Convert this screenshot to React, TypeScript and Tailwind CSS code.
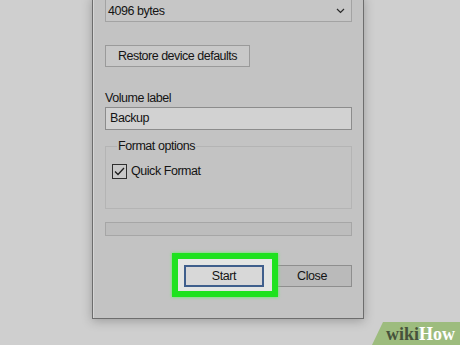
export default function App() {
  const ui = { fontFamily: '"Liberation Sans", Arial, sans-serif' };

  return (
    <div className="relative h-[345px] w-[460px] overflow-hidden bg-[#cfcfcf]" style={ui}>
      {/* dialog window, top is scrolled off */}
      <div className="-mt-[4px] ml-[92px] flex w-[272px] flex-col border border-[#6d6d6d] bg-[#c3c3c3] pb-[31px] pl-[12px] pr-[11px] text-[12.5px] tracking-[-0.45px] text-[#141414] shadow-[0_2px_10px_rgba(0,0,0,0.25),inset_1px_1px_0_#d6d6d6]">
        <div className="flex h-[25px] items-center justify-between border border-[#a3a3a3] bg-[#c6c6c6] pl-[2px] pr-[6px]">
          <span className="pt-[3px]">4096 bytes</span>
          <svg width="9" height="6" viewBox="0 0 9 6" className="mt-[3px]">
            <path d="M1 1 L4.5 4.5 L8 1" fill="none" stroke="#2a2a2a" strokeWidth="1.2" />
          </svg>
        </div>

        <button className="mt-[23px] h-[22px] w-[145px] border border-[#9a9a9a] bg-[#c8c8c8] text-center text-[12.5px] tracking-[-0.5px] text-[#141414]">
          Restore device defaults
        </button>

        <div className="mt-[23px] h-[16px] leading-[16px]">Volume label</div>
        <div className="mt-[1px] flex h-[23px] items-center border border-[#8c8c8c] bg-[#d2d2d2] pl-[4px]">
          Backup
        </div>

        <fieldset className="mt-[8px] h-[71px] border border-[#b4b4b4] px-[6px] pt-[8px]">
          <legend className="ml-[5px] px-[1px] leading-[16px]">Format options</legend>
          <label className="flex items-center gap-[4px]">
            <span className="flex h-[15px] w-[15px] items-center justify-center border border-[#2e2e2e] bg-[#c8c8c8]">
              <svg width="11" height="9" viewBox="0 0 11 9">
                <path d="M1 4.5 L4 7.5 L10 1" fill="none" stroke="#1e1e1e" strokeWidth="1.3" />
              </svg>
            </span>
            <span>Quick Format</span>
          </label>
        </fieldset>

        <div className="mt-[13px] h-[14px] border border-[#a6a6a6] bg-[#bdbdbd]" />

        <div className="mt-[29px] flex justify-end gap-[8px]">
          <div className="relative">
            <div className="absolute -bottom-[10px] -left-[12px] -right-[14px] -top-[12px] z-10 border-[6px] border-[#1fe21f] shadow-[0_0_3px_#5cf05c]" />
            <button className="relative z-20 h-[22px] w-[80px] border-2 border-[#3f5f8c] bg-[#d8d8d8] text-[12.5px] tracking-[-0.4px] text-[#141414]">
              Start
            </button>
            <div className="absolute -bottom-[4px] -left-[6px] -right-[8px] -top-[6px] bg-[#e3e5e3]" />
          </div>
          <button className="h-[22px] w-[80px] border border-[#8e8e8e] bg-[#bababa] text-[12.5px] tracking-[-0.4px] text-[#141414]">
            Close
          </button>
        </div>
      </div>

      {/* watermark */}
      <div className="absolute bottom-0 right-0 flex h-[23px] w-[88px] items-end justify-end bg-[#9dbc7e] pb-[2px] pr-[5px] [clip-path:polygon(11px_0,100%_0,100%_100%,0_100%)]">
        <span className="text-[18px] font-bold leading-[18px]" style={{ fontFamily: '"Liberation Serif", "Times New Roman", serif' }}>
          <span className="text-[#46523b]">wiki</span>
          <span className="text-white">How</span>
        </span>
      </div>
    </div>
  );
}
